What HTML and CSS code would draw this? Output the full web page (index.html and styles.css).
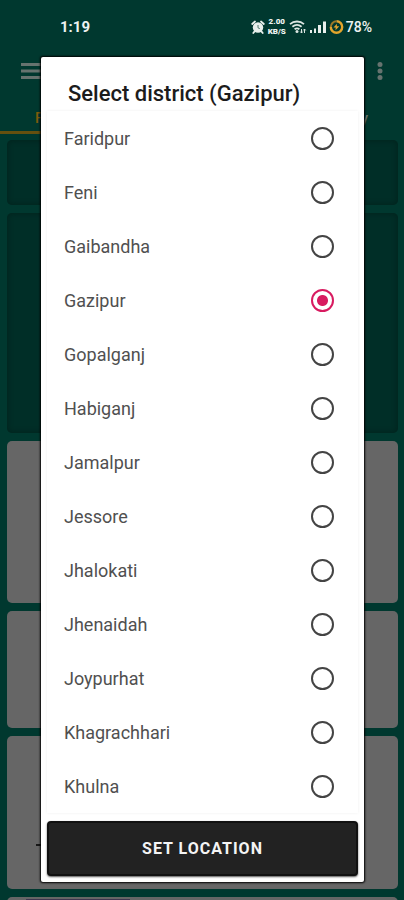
FILE: index.html
```html
<!DOCTYPE html>
<html lang="en">
<head>
<meta charset="utf-8">
<meta name="viewport" content="width=device-width, initial-scale=1">
<title>Select district</title>
<link rel="stylesheet" href="styles.css">
</head>
<body>
<div class="screen">
  <header class="status">
    <span class="time">1:19</span>
    <div class="indicators">
      <svg width="14" height="14" viewBox="0 0 14 14" aria-hidden="true">
        <circle cx="7" cy="7.5" r="5.2" fill="#e8efec"/>
        <path d="M1.200 4 4 1.500M12.800 4 10 1.500M3.600 11.400 2.300 13M10.400 11.400l1.300 1.600" stroke="#e8efec" stroke-width="1.8" stroke-linecap="round"/>
        <path d="M7 5v2.800l1.800.8" fill="none" stroke="#4f776d" stroke-width="1"/>
      </svg>
      <span class="speed"><span>2.00</span><span>KB/S</span></span>
      <svg width="18" height="14" viewBox="0 0 18 14" fill="none" stroke="#dce6e2" aria-hidden="true">
        <path d="M1 4.200C5 .6 11 .6 15 4.200M3.400 6.800c2.800-2.400 6.400-2.400 9.200 0M5.600 9.300c1.600-1.300 3.200-1.300 4.800 0" stroke-width="1.8"/>
        <circle cx="8" cy="11.400" r="1.500" fill="#dce6e2" stroke="none"/>
        <path d="M12.500 9v4M11.300 11.600l1.200 1.400 1.200-1.400M15.500 13V9M14.300 10.400 15.500 9l1.200 1.400" stroke-width="1"/>
      </svg>
      <svg width="18" height="14" viewBox="0 0 18 14" fill="#e8efec" aria-hidden="true">
        <path d="M1 10h2v3H1zM5 8.500h2V13H5zM9 5h3v8H9zM14 1.500h3V13h-3z"/>
      </svg>
      <svg width="15" height="14" viewBox="1 0 14 14" fill="none" stroke="#e3a52c" aria-hidden="true">
        <path d="M8 1.300A5.700 5.700 0 1 1 2.300 7" stroke-width="2.400"/>
        <path d="M2.300 7A5.700 5.700 0 0 1 8 1.300" stroke="#9b7828" stroke-width="2"/>
        <path d="M8.500 3.800 5 7.500h2.200L7 10.200l3.800-4H8.300z" fill="#e3a52c" stroke="none"/>
      </svg>
      <span class="battery">78%</span>
    </div>
  </header>
  <div class="toolbar">
    <button class="icon" aria-label="Menu">
      <svg width="22" height="18" viewBox="0 0 22 18" fill="#66736f"><path d="M0 1h22v3H0zM0 7.500h22v3H0zM0 14h22v3H0z"/></svg>
    </button>
    <button class="icon" aria-label="More options">
      <svg width="6" height="20" viewBox="0 0 6 20" fill="#66736f"><circle cx="3" cy="3.500" r="2.500"/><circle cx="3" cy="10" r="2.500"/><circle cx="3" cy="16.500" r="2.500"/></svg>
    </button>
  </div>
  <nav class="tabs"><a class="tab active" href="#">F</a><a class="tab" href="#">y</a></nav>
  <main class="cards">
    <section class="card dark banner"></section>
    <section class="card dark feature"></section>
    <section class="card tall"></section>
    <section class="card short"></section>
    <section class="card medium"><span class="dash"></span></section>
    <section class="card last"><span class="strip"></span></section>
  </main>

  <form class="dialog" role="dialog" aria-labelledby="title">
    <h1 id="title">Select district (Gazipur)</h1>
    <div class="list">
      <label class="row">Faridpur<input type="radio" name="district"></label>
      <label class="row">Feni<input type="radio" name="district"></label>
      <label class="row">Gaibandha<input type="radio" name="district"></label>
      <label class="row">Gazipur<input type="radio" name="district" checked></label>
      <label class="row">Gopalganj<input type="radio" name="district"></label>
      <label class="row">Habiganj<input type="radio" name="district"></label>
      <label class="row">Jamalpur<input type="radio" name="district"></label>
      <label class="row">Jessore<input type="radio" name="district"></label>
      <label class="row">Jhalokati<input type="radio" name="district"></label>
      <label class="row">Jhenaidah<input type="radio" name="district"></label>
      <label class="row">Joypurhat<input type="radio" name="district"></label>
      <label class="row">Khagrachhari<input type="radio" name="district"></label>
      <label class="row">Khulna<input type="radio" name="district"></label>
    </div>
    <button class="submit" type="button">SET LOCATION</button>
  </form>
</div>
</body>
</html>
```
FILE: styles.css
```css
* { box-sizing: border-box; }

body {
  margin: 0;
  background: #00382f;
  font-family: Roboto, "Liberation Sans", sans-serif;
}

.screen {
  position: relative;
  height: 100vh;
  overflow: hidden;
}

.status {
  display: flex;
  align-items: center;
  justify-content: space-between;
  height: 54px;
  padding: 0 32px 0 60px;
  color: #eef3f1;
}

.time { font-size: 15px; font-weight: 700; }

.indicators {
  display: flex;
  align-items: center;
  gap: 2px;
}

.speed {
  display: flex;
  flex-direction: column;
  width: 20px;
  text-align: center;
  font-size: 8px;
  font-weight: 900;
  line-height: 10px;
}

.battery { font-size: 14px; font-weight: 500; }

.toolbar {
  display: flex;
  align-items: center;
  justify-content: space-between;
  height: 34px;
  padding: 0 21px;
}

.icon {
  display: flex;
  padding: 0;
  border: 0;
  background: none;
}

.tabs {
  display: flex;
  justify-content: space-between;
  height: 46px;
  font-size: 15px;
  font-weight: 500;
  line-height: 60px;
}

.tab {
  padding-right: 36px;
  color: #66736f;
  text-decoration: none;
}

.tab.active {
  width: 33%;
  padding: 0 0 0 35px;
  border-bottom: 3px solid #66500f;
  color: #7d5c0c;
}

.cards {
  display: flex;
  flex-direction: column;
  gap: 8px;
  padding: 6px 6px 0 7px;
}

.card {
  flex: none;
  border-radius: 5px;
  background: #666;
}

.dark {
  background: #002e27;
  box-shadow: inset 0 0 4px 2px #002620;
}

.banner { height: 65px; }
.feature { height: 220px; }
.tall { height: 162px; }
.short { height: 117px; }
.medium { display: flow-root; height: 153px; }
.last { height: 60px; overflow: hidden; }

.dash {
  display: block;
  width: 10px;
  height: 2px;
  margin: 108px 0 0 29px;
  background: #181818;
}

.strip {
  display: block;
  width: 104px;
  height: 12px;
  margin: 2px 0 0 19px;
  background: #403650;
}

.dialog {
  position: absolute;
  top: 57px;
  left: 41px;
  right: 40px;
  padding-bottom: 6px;
  border-radius: 2px;
  background: #fff;
  box-shadow: 0 0 2px 1px #000;
}

h1 {
  margin: 0;
  padding: 21px 27px 1px;
  color: #1c1c1c;
  font-size: 22px;
  font-weight: 500;
  line-height: 32px;
}

.list {
  margin: 0 6px 8px;
  box-shadow: 0 0 3px #f0f0f0;
}

.row {
  display: flex;
  align-items: center;
  justify-content: space-between;
  height: 54px;
  padding: 0 24px 0 17px;
  color: #505050;
  font-size: 18px;
}

.row input {
  appearance: none;
  width: 23px;
  height: 23px;
  margin: 0;
  border: 2px solid #444;
  border-radius: 50%;
}

.row input:checked {
  border-color: #d81b60;
  background: radial-gradient(circle, #d81b60 5px, #fff 6px);
}

.submit {
  display: block;
  width: calc(100% - 12px);
  height: 55px;
  margin: 0 6px;
  border: 2px solid #111;
  border-radius: 4px;
  background: #222;
  box-shadow: 0 1px 2px #555;
  color: #f4f4f4;
  font-family: inherit;
  font-size: 16px;
  font-weight: 700;
  letter-spacing: 1px;
}
```
